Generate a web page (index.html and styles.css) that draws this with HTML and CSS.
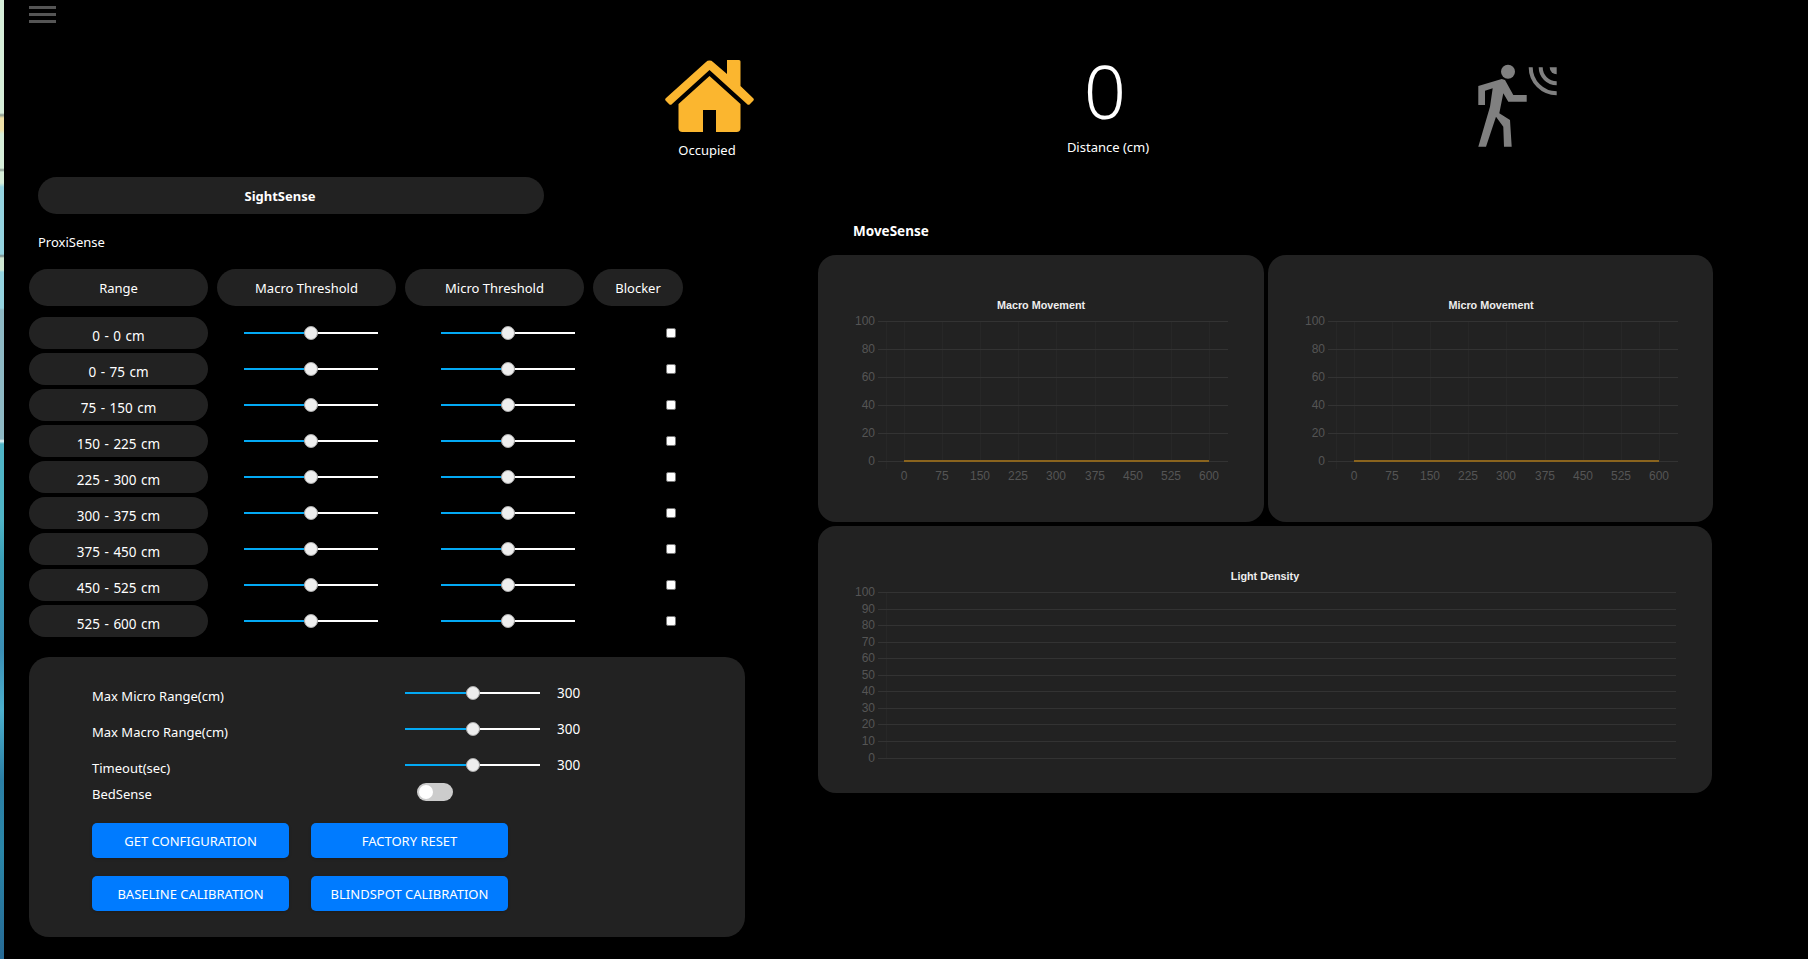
FILE: index.html
```html
<!DOCTYPE html>
<html>
<head>
<meta charset="UTF-8">
    <title>SightSense Dashboard</title>
    <link rel="stylesheet" href="styles.css">
</head>
<body>
    <div class="edge"></div>
    <div class="page">
        <div class="menu"><span></span><span></span><span></span></div>

        <div class="status">
            <div class="stat stat-home">
                <svg class="home-icon" viewBox="0 0 89 72">
                    <path fill="#fbb62f" d="M62 0h12a1.500 1.500 0 0 1 1.500 1.500V26L88 38a2 2 0 0 1 0 3l-3 3a2 2 0 0 1-3 0L44.500 10 7 44a2 2 0 0 1-3 0L1 41a2 2 0 0 1 0-3L41 2a5 5 0 0 1 7 0L62 14z"/>
                    <path fill="#fbb62f" d="M44.500 16 75.500 44V68a4 4 0 0 1-4 4H51V50H38V72H17.500a4 4 0 0 1-4-4V44z"/>
                </svg>
                <p>Occupied</p>
            </div>
            <div class="stat stat-distance">
                <div class="big-number">0</div>
                <p>Distance (cm)</p>
            </div>
            <svg class="walker-icon" viewBox="0 0 79 83">
                <circle cx="30" cy="7.700" r="7"/>
                <path d="M0.300 22 23.700 15 27 16 35.300 31H48.700V37.700H30.300L25.300 29.300 21.300 49.300 32 56 33.700 82.700H26L25.300 62.700 18 52.700 8 82.700H0.300L12 42.700 14.700 24.300 7 26.700V41H0.300z"/>
                <path fill="none" stroke="#808080" stroke-width="4" d="M52.700 3.300A26 26 0 0 0 78.700 29.300M62.700 3.300A16 16 0 0 0 78.700 19.300"/>
                <path d="M71.700 3.300A7 7 0 0 0 78.700 10.300V3.300z"/>
            </svg>
        </div>

        <div class="main">
            <div class="left">
                <div class="sight-title"><span>SightSense</span></div>
                <p class="proxi">ProxiSense</p>
                <div class="table">
                    <div class="table-head">
                        <div class="pill">Range</div>
                        <div class="pill">Macro Threshold</div>
                        <div class="pill">Micro Threshold</div>
                        <div class="pill">Blocker</div>
                    </div>
                    <div class="table-row">
                        <div class="pill pill-row">0 - 0 cm</div>
                        <input class="slider macro" type="range" min="0" max="100" value="50">
                        <input class="slider micro" type="range" min="0" max="100" value="50">
                        <input class="blocker" type="checkbox">
                    </div>
                    <div class="table-row">
                        <div class="pill pill-row">0 - 75 cm</div>
                        <input class="slider macro" type="range" min="0" max="100" value="50">
                        <input class="slider micro" type="range" min="0" max="100" value="50">
                        <input class="blocker" type="checkbox">
                    </div>
                    <div class="table-row">
                        <div class="pill pill-row">75 - 150 cm</div>
                        <input class="slider macro" type="range" min="0" max="100" value="50">
                        <input class="slider micro" type="range" min="0" max="100" value="50">
                        <input class="blocker" type="checkbox">
                    </div>
                    <div class="table-row">
                        <div class="pill pill-row">150 - 225 cm</div>
                        <input class="slider macro" type="range" min="0" max="100" value="50">
                        <input class="slider micro" type="range" min="0" max="100" value="50">
                        <input class="blocker" type="checkbox">
                    </div>
                    <div class="table-row">
                        <div class="pill pill-row">225 - 300 cm</div>
                        <input class="slider macro" type="range" min="0" max="100" value="50">
                        <input class="slider micro" type="range" min="0" max="100" value="50">
                        <input class="blocker" type="checkbox">
                    </div>
                    <div class="table-row">
                        <div class="pill pill-row">300 - 375 cm</div>
                        <input class="slider macro" type="range" min="0" max="100" value="50">
                        <input class="slider micro" type="range" min="0" max="100" value="50">
                        <input class="blocker" type="checkbox">
                    </div>
                    <div class="table-row">
                        <div class="pill pill-row">375 - 450 cm</div>
                        <input class="slider macro" type="range" min="0" max="100" value="50">
                        <input class="slider micro" type="range" min="0" max="100" value="50">
                        <input class="blocker" type="checkbox">
                    </div>
                    <div class="table-row">
                        <div class="pill pill-row">450 - 525 cm</div>
                        <input class="slider macro" type="range" min="0" max="100" value="50">
                        <input class="slider micro" type="range" min="0" max="100" value="50">
                        <input class="blocker" type="checkbox">
                    </div>
                    <div class="table-row">
                        <div class="pill pill-row">525 - 600 cm</div>
                        <input class="slider macro" type="range" min="0" max="100" value="50">
                        <input class="slider micro" type="range" min="0" max="100" value="50">
                        <input class="blocker" type="checkbox">
                    </div>
                </div>

                <div class="settings">
                    <div class="setting">
                        <label>Max Micro Range(cm)</label>
                        <input class="slider" type="range" min="0" max="600" value="300">
                        <span class="value">300</span>
                    </div>
                    <div class="setting">
                        <label>Max Macro Range(cm)</label>
                        <input class="slider" type="range" min="0" max="600" value="300">
                        <span class="value">300</span>
                    </div>
                    <div class="setting">
                        <label>Timeout(sec)</label>
                        <input class="slider" type="range" min="0" max="600" value="300">
                        <span class="value">300</span>
                    </div>
                    <div class="setting setting-toggle">
                        <label>BedSense</label>
                        <span class="toggle"></span>
                    </div>
                    <div class="buttons">
                        <button>GET CONFIGURATION</button>
                        <button>FACTORY RESET</button>
                        <button>BASELINE CALIBRATION</button>
                        <button>BLINDSPOT CALIBRATION</button>
                    </div>
                </div>
            </div>

            <div class="right">
                <div class="move-title">MoveSense</div>
                <div class="charts">
                    <div class="card">
                        <svg class="chart" width="446" height="267" viewBox="0 0 446 267">
                            <text class="chart-title" x="223" y="54">Macro Movement</text>
                            <path class="grid-v" d="M68.500 66V214M86.500 66V206M124.500 66V206M162.500 66V206M200.500 66V206M238.500 66V206M277.500 66V206M315.500 66V206M353.500 66V206M391.500 66V206"/>
                            <path class="grid-h" d="M60 66.500H410M60 94.500H410M60 122.500H410M60 150.500H410M60 178.500H410M60 206.500H410"/>
                            <path class="line" d="M86 206H391"/>
                            <g class="ticks-y">
                                <text x="57" y="70">100</text><text x="57" y="98">80</text><text x="57" y="126">60</text><text x="57" y="154">40</text><text x="57" y="182">20</text><text x="57" y="210">0</text>
                            </g>
                            <g class="ticks-x">
                                <text x="86" y="225">0</text><text x="124" y="225">75</text><text x="162" y="225">150</text><text x="200" y="225">225</text><text x="238" y="225">300</text><text x="277" y="225">375</text><text x="315" y="225">450</text><text x="353" y="225">525</text><text x="391" y="225">600</text>
                            </g>
                        </svg>
                    </div>
                    <div class="card">
                        <svg class="chart" width="445" height="267" viewBox="0 0 445 267">
                            <text class="chart-title" x="223" y="54">Micro Movement</text>
                            <path class="grid-v" d="M68.500 66V214M86.500 66V206M124.500 66V206M162.500 66V206M200.500 66V206M238.500 66V206M277.500 66V206M315.500 66V206M353.500 66V206M391.500 66V206"/>
                            <path class="grid-h" d="M60 66.500H410M60 94.500H410M60 122.500H410M60 150.500H410M60 178.500H410M60 206.500H410"/>
                            <path class="line" d="M86 206H391"/>
                            <g class="ticks-y">
                                <text x="57" y="70">100</text><text x="57" y="98">80</text><text x="57" y="126">60</text><text x="57" y="154">40</text><text x="57" y="182">20</text><text x="57" y="210">0</text>
                            </g>
                            <g class="ticks-x">
                                <text x="86" y="225">0</text><text x="124" y="225">75</text><text x="162" y="225">150</text><text x="200" y="225">225</text><text x="238" y="225">300</text><text x="277" y="225">375</text><text x="315" y="225">450</text><text x="353" y="225">525</text><text x="391" y="225">600</text>
                            </g>
                        </svg>
                    </div>
                    <div class="card card-wide">
                        <svg class="chart" width="894" height="267" viewBox="0 0 894 267">
                            <text class="chart-title" x="447" y="54">Light Density</text>
                            <path class="grid-v" d="M68.500 66V232"/>
                            <path class="grid-h" d="M60 66.500H858M60 83.500H858M60 99.500H858M60 116.500H858M60 132.500H858M60 149.500H858M60 165.500H858M60 182.500H858M60 198.500H858M60 215.500H858M60 232.500H858"/>
                            <g class="ticks-y">
                                <text x="57" y="70">100</text><text x="57" y="87">90</text><text x="57" y="103">80</text><text x="57" y="120">70</text><text x="57" y="136">60</text><text x="57" y="153">50</text><text x="57" y="169">40</text><text x="57" y="186">30</text><text x="57" y="202">20</text><text x="57" y="219">10</text><text x="57" y="236">0</text>
                            </g>
                        </svg>
                    </div>
                </div>
            </div>
        </div>
    </div>
</body>
</html>
```

FILE: styles.css
```css
* { box-sizing: border-box; }
html, body { height: 100%; }
body { margin: 0; background-color: #000; color: #fff; font-family: "Noto Sans", "Open Sans", sans-serif; font-size: 13px; overflow: hidden; display: flex; }
p { margin: 0; }

.edge { width: 4px; flex: none; background: linear-gradient(to bottom, #d6eed9 0, #d6eed9 113px, #8a9a90 115px, #f0e2a8 118px, #f0e2a8 130px, #d6eed9 134px, #d6eed9 168px, #8a9a90 170px, #d6eed9 172px, #d6eed9 183px, #94d4e0 187px, #94d4e0 254px, #7a8a8a 256px, #cfe8d2 258px, #cfe8d2 270px, #94d4e0 272px, #94d4e0 308px, #8db8c4 310px, #8db8c4 439px, #e8f4f4 441px, #4fb4c6 444px, #4fb4c6 520px, #3ba0b8 560px, #3b8fb5 650px, #4cb0cd 710px, #2b7fa5 780px, #2a86a8 850px, #266a95 959px); }
.page { flex: 1; padding-left: 25px; }

.menu { display: flex; flex-direction: column; gap: 4px; width: 27px; padding-top: 6px; }
.menu span { display: block; height: 3px; background-color: #555; }

.status { display: flex; align-items: flex-start; height: 154px; padding-top: 37px; }
.status p { text-align: center; }
.stat-home { width: 90px; margin-left: 636px; }
.home-icon { display: block; width: 89px; height: 72px; }
.stat-home p { margin-top: 9px; margin-left: -6px; }
.stat-distance { width: 120px; margin-left: 293px; }
.big-number { font-size: 74px; font-weight: 300; line-height: 82px; text-align: center; margin-left: -6px; margin-top: -10px; }
.stat-distance p { margin-top: 6px; }
.walker-icon { width: 79px; height: 83px; margin-left: 310px; margin-top: 4px; fill: #808080; }

.main { display: flex; align-items: flex-start; }
.left { width: 716px; flex: none; }
.right { margin-left: 73px; flex: none; }

.sight-title { margin-left: 9px; width: 506px; height: 37px; border-radius: 19px; background-color: #222; font-weight: 700; display: flex; align-items: center; justify-content: center; padding-right: 22px; }
.proxi { margin-left: 9px; margin-top: 19px; line-height: 18px; }

.table { margin-top: 18px; }
.table-head { display: grid; grid-template-columns: 179px 179px 179px 90px; column-gap: 9px; margin-bottom: 11px; }
.table-row { display: grid; grid-template-columns: 179px auto auto auto; justify-content: start; align-items: center; height: 36px; }
.pill { height: 37px; border-radius: 19px; background-color: #222; display: flex; align-items: center; justify-content: center; }
.pill-row { align-self: start; height: 32px; padding-top: 5px; border-radius: 16px; font-size: 13.5px; word-spacing: 1px; }
.table-row .macro { margin-left: 36px; margin-top: -4px; }
.table-row .micro { margin-left: 63px; margin-top: -4px; }
.table-row .blocker { margin-left: 91px; margin-top: -2px; }

.slider { -webkit-appearance: none; appearance: none; display: block; width: 134px; height: 14px; margin: 0; background: linear-gradient(to right, #03a9f4 50%, #fff 50%) no-repeat center / 100% 2px; }
.slider::-webkit-slider-thumb { -webkit-appearance: none; width: 14px; height: 14px; border-radius: 50%; background-color: #eee; border: 1px solid #aaa; }

.blocker { -webkit-appearance: none; appearance: none; width: 10px; height: 10px; background-color: #fff; border: 1px solid #767676; border-radius: 2px; }

.settings { margin-top: 16px; width: 716px; height: 280px; border-radius: 20px; background-color: #222; padding: 22px 0 0 63px; }
.setting { display: flex; align-items: flex-start; height: 36px; }
.setting label { width: 313px; padding-top: 8px; line-height: 18px; }
.setting .slider { margin-top: 7px; width: 135px; }
.setting .value { margin-left: 17px; margin-top: 5px; line-height: 18px; font-size: 13.5px; }
.setting-toggle { height: 30px; }
.setting-toggle label { width: 325px; padding-top: 0; margin-top: -2px; }
.toggle { display: block; width: 36px; height: 18px; padding: 2px; margin-top: -4px; border-radius: 9px; background-color: #ccc; }
.toggle::after { content: ""; display: block; width: 14px; height: 14px; border-radius: 50%; background-color: #fff; }

.buttons { display: grid; grid-template-columns: 197px 197px; column-gap: 22px; row-gap: 18px; margin-top: 6px; }
button { height: 35px; border: none; border-radius: 5px; background-color: #007bff; color: #fff; font-family: inherit; font-size: 13px; padding: 0; box-shadow: 0 1px 3px rgba(0,0,0,0.2); }

.move-title { font-weight: 700; font-size: 13.5px; margin-left: 35px; line-height: 18px; margin-top: 45px; }
.charts { display: grid; grid-template-columns: 446px 445px; gap: 4px; margin-top: 15px; }
.card { height: 267px; border-radius: 18px; background-color: #222; }
.card-wide { grid-column: 1 / 3; width: 894px; }
.chart { display: block; font-family: "Liberation Sans", Arial, sans-serif; }
.chart-title { fill: #eee; font-size: 10.800px; font-weight: 700; text-anchor: middle; }
.grid-h { stroke: #333; stroke-width: 1; fill: none; }
.grid-v { stroke: #272727; stroke-width: 1; fill: none; }
.line { stroke: #8a641e; stroke-width: 2; fill: none; }
.ticks-y text { fill: #555; font-size: 12px; text-anchor: end; }
.ticks-x text { fill: #555; font-size: 12px; text-anchor: middle; }
```
